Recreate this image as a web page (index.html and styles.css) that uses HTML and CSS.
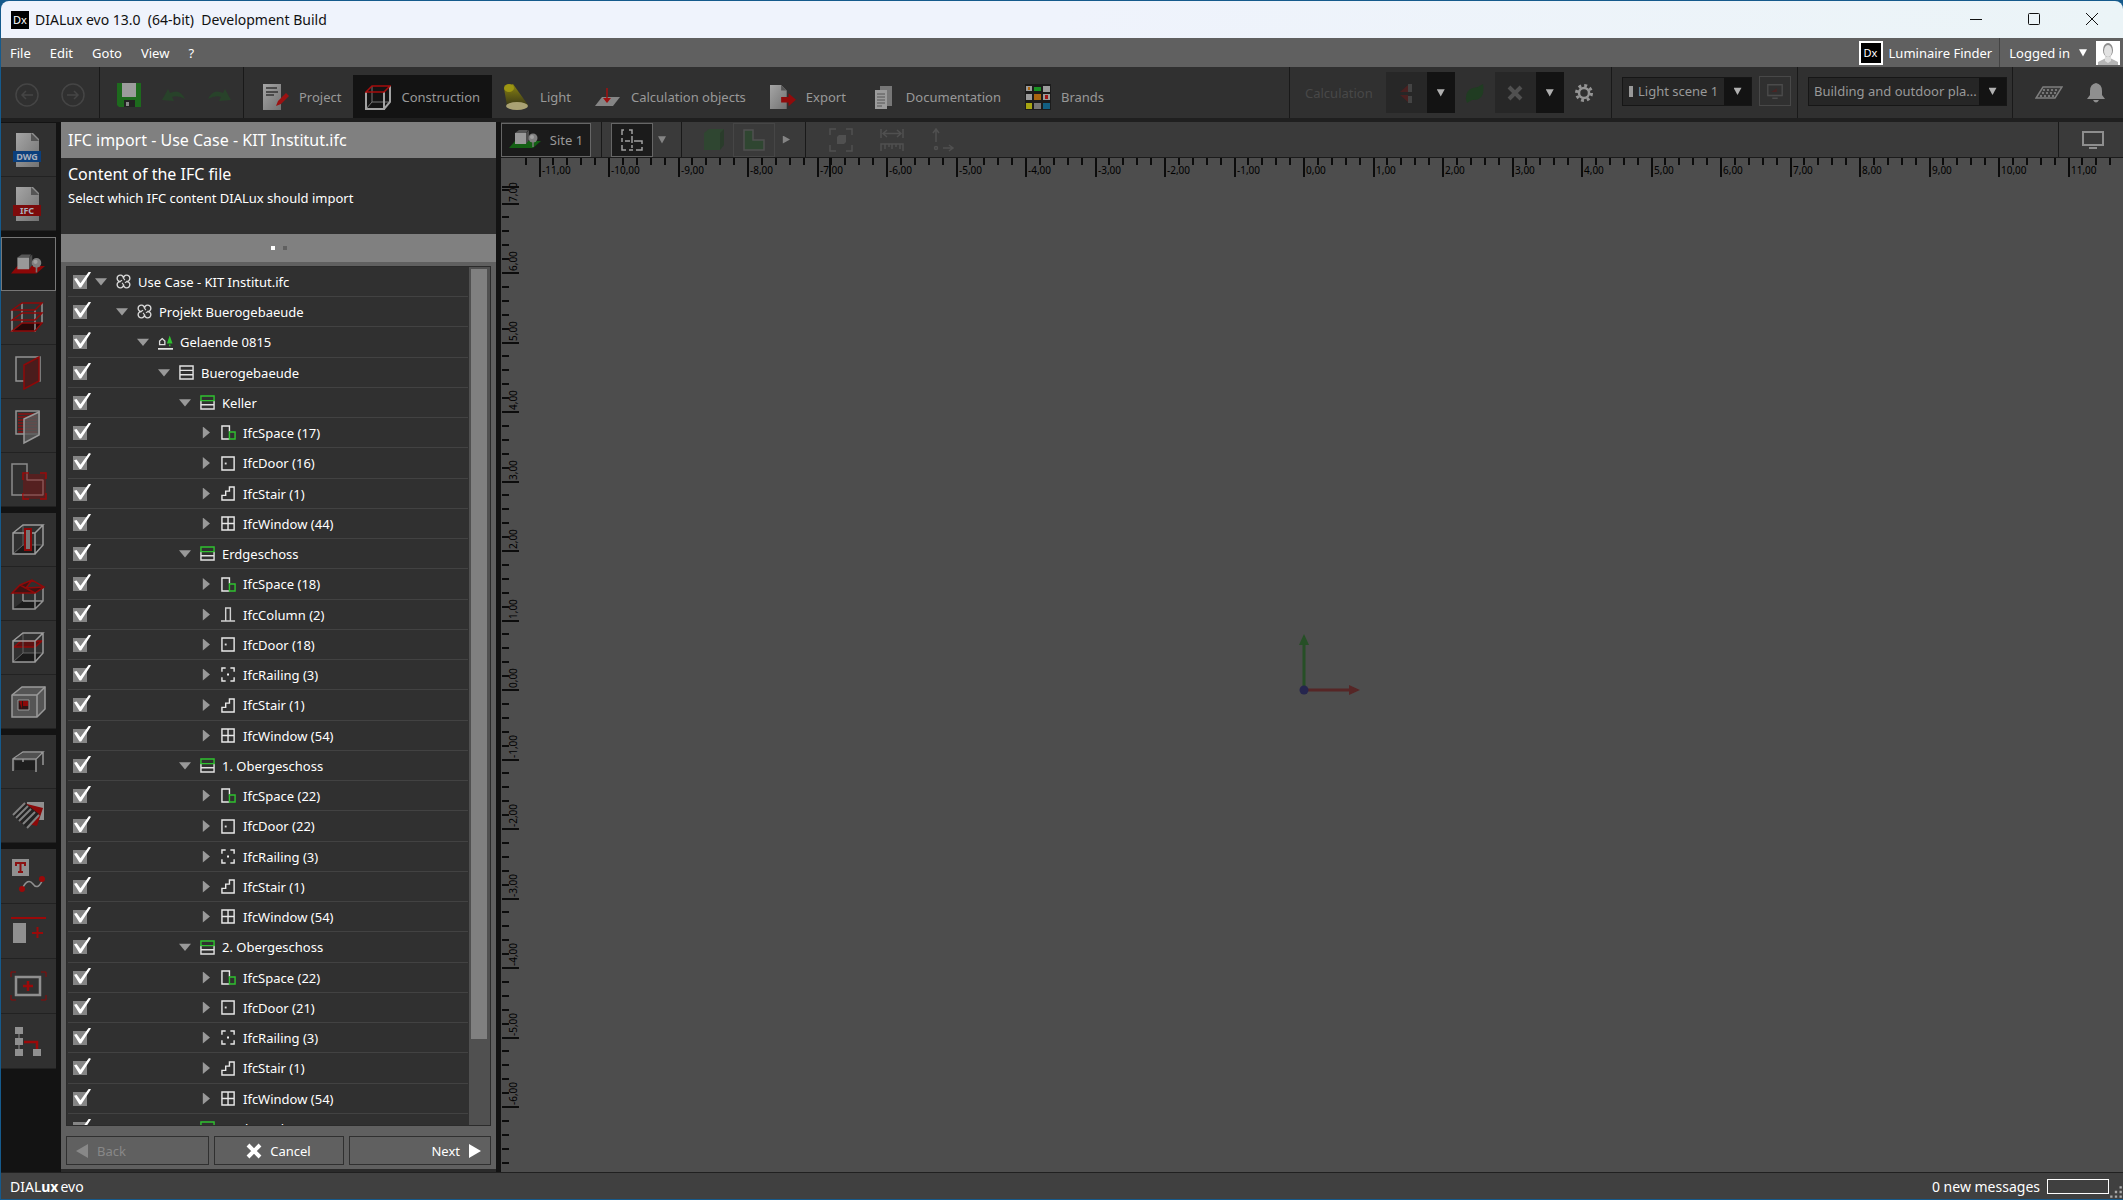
FILE: index.html
```
<!DOCTYPE html>
<html lang="en">
  <head>
    <meta charset="UTF-8" />
    <meta name="viewport" content="width=device-width, initial-scale=1.0" />
    <title>DIALux evo 13.0 (64-bit) Development Build</title>
    <link rel="stylesheet" href="styles.css">
  </head>
  <body>
    <!-- shared icons -->
    <svg class="defs" aria-hidden="true">
      <defs>
        <linearGradient id="beam" x1="0" y1="0" x2="0" y2="1">
          <stop offset="0" stop-color="#8a8412" />
          <stop offset="1" stop-color="#3a3816" />
        </linearGradient>
        <linearGradient id="paper" x1="0" y1="0" x2="1" y2="1">
          <stop offset="0" stop-color="#a5a5a5" />
          <stop offset="1" stop-color="#727272" />
        </linearGradient>
      </defs>
      <symbol id="project" viewBox="0 0 16 16">
        <path d="M8 5A3.4 3.4 0 1 0 5 8A3.4 3.4 0 1 0 8 11A3.4 3.4 0 1 0 11 8A3.4 3.4 0 1 0 8 5z" transform="rotate(0 8 8)" fill="none" stroke="#d8d8d8" stroke-width="1.5" />
        <path d="M8 4.500L9.500 6.500M11.500 8L9.500 9.500M8 11.500L6.500 9.500M4.500 8L6.500 6.500" stroke="#d8d8d8" stroke-width="1.2" />
      </symbol>
      <symbol id="ground" viewBox="0 0 16 16">
        <path d="M1.7 10.3V6.5L4.5 3.8L7.3 6.5V10.3z" fill="none" stroke="#ddd" stroke-width="1.4" />
        <path d="M12.5 0.5L15.5 9H9.5zM11.8 10h1.5v2h-1.5z" fill="#2fc12f" />
        <path d="M0 14.8h16" stroke="#fff" stroke-width="1.6" />
      </symbol>
      <symbol id="building" viewBox="0 0 16 16">
        <path d="M1 1h14v14H1zM1 5.7h14M1 10.4h14" fill="none" stroke="#e2e2e2" stroke-width="1.5" />
      </symbol>
      <symbol id="storey" viewBox="0 0 16 16">
        <path d="M1 6v9h14V6M1 10.4h14" fill="none" stroke="#e2e2e2" stroke-width="1.5" />
        <path d="M1 1h14v5H1z" fill="none" stroke="#2fc12f" stroke-width="1.5" />
      </symbol>
      <symbol id="space" viewBox="0 0 16 16">
        <path d="M9 7V1H1v14h8" fill="none" stroke="#e8e8e8" stroke-width="1.5" />
        <path d="M9 7.5h6V15H9z" fill="none" stroke="#2fc12f" stroke-width="1.5" />
      </symbol>
      <symbol id="door" viewBox="0 0 16 16">
        <path d="M1 1h13v14H1z" fill="none" stroke="#e8e8e8" stroke-width="1.5" />
        <path d="M4 7h2v2H4z" fill="#ddd" />
      </symbol>
      <symbol id="stair" viewBox="0 0 16 16">
        <path d="M1 15V10H5V5.500H9V1H14V15z" fill="none" stroke="#e8e8e8" stroke-width="1.5" />
      </symbol>
      <symbol id="window" viewBox="0 0 16 16">
        <path d="M1 1h13v14H1zM7.500 1v14M1 8h13" fill="none" stroke="#e8e8e8" stroke-width="1.5" />
      </symbol>
      <symbol id="column" viewBox="0 0 16 16">
        <path d="M0 15h15M5 15V1h5v14" fill="none" stroke="#d0d0d0" stroke-width="1.5" />
      </symbol>
      <symbol id="railing" viewBox="0 0 16 16">
        <path d="M1 5V1H5M10 1H14V5M14 11V15H10M5 15H1V11" fill="none" stroke="#e8e8e8" stroke-width="1.5" />
        <path d="M6.500 7h2v2h-2z" fill="#fff" />
      </symbol>
      <symbol id="site" viewBox="0 0 32 24">
        <path class="site-ground" d="M6 13H32L24 20H0z" />
        <path d="M6 5l4-3h9l-2 3z" fill="#565656" />
        <path d="M6 5h11v11H6z" fill="#999" />
        <path d="M17 5l3-3v10l-3 4z" fill="#4d4d4d" />
        <path d="M24 13v6" stroke="#777" stroke-width="1.5" />
        <circle cx="24" cy="10" r="4.5" fill="#808080" />
        <circle cx="23" cy="9" r="2" fill="#a0a0a0" />
      </symbol>
      <symbol id="box" viewBox="0 0 36 36">
        <path d="M3 32L13 23H33L24 32z" fill="#1b1b1b" />
        <path d="M13 3V23H33M13 23L3 32" fill="none" stroke="#656565" />
        <path d="M3 11H25V32H3zM3 11L13 3H33L25 11M33 3V23L25 32" fill="none" stroke="#9b9b9b" stroke-width="1.5" />
      </symbol>
    </svg>

    <div class="window">
      <header class="titlebar">
        <span class="app-icon">Dx</span>
        <span>DIALux evo 13.0&nbsp; (64-bit)&nbsp; Development Build</span>
        <div class="window-buttons">
          <button aria-label="Minimize"><svg viewBox="0 0 12 12"><path d="M0 6.500h12" /></svg></button>
          <button aria-label="Maximize"><svg viewBox="0 0 12 12"><rect x="0.500" y="0.500" width="11" height="11" rx="1" /></svg></button>
          <button aria-label="Close"><svg viewBox="0 0 12 12"><path d="M0 0L12 12M12 0L0 12" /></svg></button>
        </div>
      </header>

      <nav class="menubar">
        <button>File</button>
        <button>Edit</button>
        <button>Goto</button>
        <button>View</button>
        <button>?</button>
        <a class="finder" href="#"><span class="app-icon framed">Dx</span>Luminaire Finder</a>
        <button class="login">
          Logged in <i class="down"></i>
          <svg class="avatar" viewBox="0 0 24 24">
            <path d="M0 0h24v24H0z" fill="#fff" />
            <path d="M2 24v-3l7-3.500h6l7 3.500v3z" fill="#b5b5b5" />
            <path d="M9 13h6v7l-3 2l-3-2z" fill="#ddd" />
            <ellipse cx="12" cy="9" rx="5" ry="7" fill="#8c8c8c" />
            <ellipse cx="12" cy="10" rx="4" ry="6" fill="#e2e2e2" />
          </svg>
        </button>
      </nav>

      <div class="toolbar">
        <div class="group history">
          <button aria-label="Previous"><svg viewBox="0 0 24 24"><circle cx="12" cy="12" r="11" /><path d="M18 12H7M11 8l-4 4l4 4" /></svg></button>
          <button aria-label="Next view"><svg viewBox="0 0 24 24"><circle cx="12" cy="12" r="11" /><path d="M6 12h11M13 8l4 4l-4 4" /></svg></button>
        </div>
        <div class="group edit">
          <button aria-label="Save">
            <svg viewBox="0 0 24 24">
              <path d="M0 0h24v24H2l-2-2z" fill="#1d6a1d" />
              <path d="M5 0h14v14H5z" fill="#9c9c9c" />
              <path d="M7 17h11v7H7z" fill="#222" />
              <path d="M9 19h3v4H9z" fill="#888" />
            </svg>
          </button>
          <button aria-label="Undo"><svg viewBox="0 0 24 24"><path d="M0 17L6 6L8 10Q18 5 23 16Q16 12 10 14L12 18z" fill="#28422a" /></svg></button>
          <button aria-label="Redo"><svg viewBox="0 0 24 24"><path d="M24 17L18 6L16 10Q6 5 1 16Q8 12 14 14L12 18z" fill="#28422a" /></svg></button>
        </div>
        <div class="group tabs">
          <button class="tab">
            <svg viewBox="0 0 26 26">
              <path d="M0 0h18v26H0z" fill="url(#paper)" />
              <path d="M3 4h11M3 8h12M3 11h8" stroke="#333" stroke-width="1.500" />
              <path d="M13 22l2-5l8-8l3 3l-8 8z" fill="#9b1212" />
            </svg>
            Project
          </button>
          <button class="tab active">
            <svg viewBox="0 0 26 26">
              <path d="M7 2V18H25M7 18L1 25" fill="none" stroke="#777" />
              <path d="M1 8V25H19V8M25 2V18L19 25" fill="none" stroke="#a2a2a2" stroke-width="2" />
              <path d="M1 8L7 2H25L19 8z" fill="none" stroke="#a60d0d" stroke-width="1.500" />
            </svg>
            Construction
          </button>
          <button class="tab">
            <svg viewBox="0 0 26 26">
              <path d="M0 4L9 0L24 21L3 22z" fill="url(#beam)" />
              <ellipse cx="5" cy="4" rx="5" ry="4" fill="#9c9512" />
              <ellipse cx="13" cy="22" rx="11" ry="4" fill="#aaa274" />
            </svg>
            Light
          </button>
          <button class="tab">
            <svg viewBox="0 0 26 26">
              <path d="M7 13H25L18 22H0z" fill="#858585" />
              <path d="M12 4V15" stroke="#a01010" stroke-width="1.500" />
              <path d="M8 14h8l-4 5z" fill="#a01010" />
            </svg>
            Calculation objects
          </button>
          <button class="tab">
            <svg viewBox="0 0 28 26">
              <path d="M0 0h12l6 6v20H0z" fill="url(#paper)" />
              <path d="M12 0v6h6z" fill="#555" />
              <path d="M12 13h8V9l8 7l-8 7v-4h-8z" fill="#900b0b" />
            </svg>
            Export
          </button>
          <button class="tab">
            <svg viewBox="0 0 26 26">
              <path d="M10 2h12v20H10z" fill="#777" />
              <path d="M5 6h12v19H5z" fill="#9b9b9b" />
              <path d="M7 10h8M7 13h8M7 16h8M7 19h8M7 22h5" stroke="#555" />
            </svg>
            Documentation
          </button>
          <button class="tab">
            <svg viewBox="0 0 26 26">
              <path d="M0 0h26v26H0z" fill="#1c1c1c" />
              <path d="M1 2h6v5H1zM18 2h7v6h-7zM1 10h6v6H1zM18 10h7v6h-7z" fill="#9c9c9c" />
              <path d="M9 3h7v4H9z" fill="#1b9224" />
              <path d="M9 10h7v6H9zM3 3h2v3H3z" fill="#aa6510" />
              <path d="M1 19h6v6H1z" fill="#a7a512" />
              <path d="M9 19h7v6H9z" fill="#777" />
              <path d="M18 19h7v6h-7z" fill="#125f82" />
              <path d="M20 11h3v4h-3z" fill="#a01515" />
            </svg>
            Brands
          </button>
        </div>
        <div class="group calc">
          <span class="disabled">Calculation</span>
          <div class="split">
            <button aria-label="Start calculation"><svg viewBox="0 0 24 24"><path d="M6 11L14 4V11zM6 14H14V21z" fill="#4a2020" /><path d="M14 3h4v8h-4zM14 15h4v7h-4z" fill="#444" /></svg></button>
            <button class="drop" aria-label="Calculation options"><i class="down"></i></button>
          </div>
          <svg class="leaf" viewBox="0 0 20 20"><path d="M1 17Q0 7 8 5Q14 4 18 1Q21 18 7 17L2 20z" fill="#203c22" /></svg>
          <div class="split">
            <button aria-label="Delete results"><svg viewBox="0 0 24 24"><path d="M6 6L18 18M18 6L6 18" stroke="#505050" stroke-width="4" /></svg></button>
            <button class="drop" aria-label="Delete options"><i class="down"></i></button>
          </div>
          <button class="gear" aria-label="Settings">
            <svg viewBox="0 0 20 20"><circle cx="10" cy="10" r="7.500" stroke="#949494" stroke-width="3" stroke-dasharray="2.900 2.990" fill="none" /><circle cx="10" cy="10" r="5" stroke="#949494" stroke-width="2.500" fill="none" /></svg>
          </button>
        </div>
        <div class="group scenes">
          <div class="combo scene">
            <i class="scene-mark"></i>
            <select aria-label="Light scene"><option>Light scene 1</option></select>
            <span class="arrow"><i class="down"></i></span>
          </div>
          <button class="preview" aria-label="Preview"><svg viewBox="0 0 20 20"><path d="M2 3h16v12H2zM7 18h6" /><path d="M6 11l6-4v4z" fill="#4a2424" stroke="none" /></svg></button>
        </div>
        <div class="group">
          <div class="combo mode">
            <select aria-label="Planning mode"><option>Building and outdoor pla...</option></select>
            <span class="arrow"><i class="down"></i></span>
          </div>
        </div>
        <div class="group extras">
          <svg viewBox="0 0 28 16"><path d="M8 2H27L20 13H1z" fill="#3a3a3a" stroke="#7d7d7d" stroke-width="1.500" /><path d="M8 5h16M7 8h15M5 11h14" stroke="#8a8a8a" stroke-width="1.500" stroke-dasharray="2 2" /></svg>
          <svg class="bell" viewBox="0 0 18 20"><path d="M9 0Q15 1 15 8V12L18 16H0L3 12V8Q3 1 9 0zM6 17h6q-3 5-6 0z" fill="#8f8f8f" /></svg>
        </div>
      </div>

      <main class="workspace">
        <aside class="tools">
          <div class="tool-group">
            <button aria-label="DWG">
              <svg viewBox="0 0 36 36">
                <path d="M6 1h17l6 6v28H6z" fill="url(#paper)" /><path d="M21 1v8h8z" fill="#555" />
                <path d="M3 19h28v11H3z" fill="#0b3f7c" /><text x="17" y="28">DWG</text>
              </svg>
            </button>
            <button aria-label="IFC">
              <svg viewBox="0 0 36 36">
                <path d="M6 1h17l6 6v28H6z" fill="url(#paper)" /><path d="M21 1v8h8z" fill="#555" />
                <path d="M3 19h28v11H3z" fill="#7c0b0b" /><text x="17" y="28">IFC</text>
              </svg>
            </button>
          </div>
          <div class="tool-group">
            <button class="selected" aria-label="Site"><svg class="red-site" viewBox="0 0 36 36"><use href="#site" x="1" y="6" width="34" height="26" /></svg></button>
            <button aria-label="Storeys">
              <svg viewBox="0 0 36 36">
                <path d="M3 31L13 23H33L25 31z" fill="#260808" />
                <path d="M2 10V32M25 10V32M12 3V23M32 3V23" fill="none" stroke="#949494" stroke-width="1.500" />
                <path d="M2 10L12 3H32L25 10zM2 20L12 13H32L25 20zM2 31L12 23H32L25 31z" fill="none" stroke="#8f0808" stroke-width="1.500" />
              </svg>
            </button>
            <button aria-label="Walls">
              <svg viewBox="0 0 36 36">
                <path d="M6 3h24v24H6z" fill="none" stroke="#929292" stroke-width="1.500" />
                <path d="M14 11L29 3V27L14 35z" fill="#4a1c1c" stroke="#8f0808" stroke-width="1.500" />
              </svg>
            </button>
            <button aria-label="Facade">
              <svg viewBox="0 0 36 36">
                <path d="M6 3h23v23H6z" fill="none" stroke="#929292" stroke-width="1.500" />
                <path d="M8 6h19M8 9h19M8 12h19M8 15h19M8 18h19M8 21h19M8 24h19" stroke="#8b1111" stroke-width="1.500" />
                <path d="M14 11L29 4V27L14 35z" fill="#5a5a5a" fill-opacity="0.800" stroke="#9a9a9a" stroke-width="1.500" />
              </svg>
            </button>
            <button aria-label="Rooms">
              <svg viewBox="0 0 36 36">
                <path d="M2 2h15v16h16v15H2z" fill="none" stroke="#8b8b8b" stroke-width="1.500" />
                <path d="M13 12h23v25H13z" fill="#651919" fill-opacity="0.700" />
                <path d="M13 18V11h6M30 11h6v6M36 31v6h-6M19 37h-6v-6" fill="none" stroke="#9a0909" stroke-width="1.500" />
                <path d="M17 12v6h16v15H13" fill="none" stroke="#8e5959" />
              </svg>
            </button>
          </div>
          <div class="tool-group">
            <button aria-label="Columns"><svg viewBox="0 0 36 36"><use href="#box" width="36" height="36" /><path d="M15 7h6v21h-6z" fill="#777" stroke="#8b0909" stroke-width="2" /></svg></button>
            <button aria-label="Roofs">
              <svg viewBox="0 0 36 36">
                <path d="M3 33L13 25H33L25 33z" fill="#1b1b1b" />
                <path d="M3 17V33H25V17M33 11V25L25 33M13 25H33M13 14V25" fill="none" stroke="#929292" stroke-width="1.500" />
                <path d="M2 17L10 9L22 4L34 11L25 17zM10 9L25 17M22 4L16 12L34 11" fill="#3e1414" stroke="#8f0909" stroke-width="1.500" />
              </svg>
            </button>
            <button aria-label="Ceilings"><svg viewBox="0 0 36 36"><path d="M4 17L11 11H32L25 17z" fill="#5d1111" stroke="#8f0909" stroke-width="1.500" /><use href="#box" width="36" height="36" /></svg></button>
            <button aria-label="Openings">
              <svg viewBox="0 0 36 36">
                <path d="M2 11L12 3H35V25L27 33H2z" fill="#555" stroke="#9a9a9a" stroke-width="1.500" />
                <path d="M2 11H27V33M27 11L35 3" fill="none" stroke="#9a9a9a" stroke-width="1.500" />
                <path d="M8 16h11v10H8z" fill="#2b1515" stroke="#9a9a9a" /><path d="M13 17h5v5h-5zM9 17h3v8z" fill="#8b0909" />
              </svg>
            </button>
          </div>
          <div class="tool-group">
            <button aria-label="Furniture"><svg viewBox="0 0 36 36"><path d="M5 26V17H25V26z" fill="#1e1e1e" /><path d="M3 27V15L13 8H33L26 15H3M26 15V28M33 8V21M13 18V15" fill="none" stroke="#969696" stroke-width="1.500" /><path d="M5 14L13 9H31L26 14z" fill="#505050" /></svg></button>
            <button aria-label="Materials">
              <svg viewBox="0 0 36 36">
                <path d="M17 4h17v18H17z" fill="#909090" />
                <path d="M13 5L33 10L27 28L10 24z" fill="#8b0909" />
                <path d="M3 17L15 5L29 16L17 30z" fill="#222" />
                <path d="M3 17L15 5M6 20L18 8M9 23L21 11M13 26L25 14M17 30L29 17" stroke="#808080" stroke-width="2" />
              </svg>
            </button>
          </div>
          <div class="tool-group">
            <button aria-label="Text and curves">
              <svg viewBox="0 0 36 36">
                <path d="M2 1h17v17H2z" fill="#909090" /><path d="M6 8V5H15V8M10.500 5V14M8 14h5" fill="none" stroke="#8b1111" stroke-width="2" />
                <path d="M12 31Q18 19 23 26T33 21" fill="none" stroke="#909090" stroke-width="1.500" />
                <circle cx="12" cy="31" r="3" fill="#9a0909" /><circle cx="32" cy="21" r="3" fill="#9a0909" />
              </svg>
            </button>
            <button aria-label="Add element"><svg viewBox="0 0 36 36"><path d="M1 5h35M22 20h11M27.500 14v11" stroke="#9a0909" stroke-width="2" /><path d="M3 10h13v20H3z" fill="#909090" /></svg></button>
            <button aria-label="Add area">
              <svg viewBox="0 0 36 36">
                <path d="M6 9h24v18H6z" fill="none" stroke="#8f8f8f" stroke-width="2.500" />
                <path d="M18 13v10M13 18h10" stroke="#9a0909" stroke-width="2.500" />
                <path d="M1 9V4H6M31 4h5v5M36 27v5h-5M6 32H1v-5" fill="none" stroke="#8b0909" />
              </svg>
            </button>
            <button aria-label="Arrange"><svg viewBox="0 0 36 36"><path d="M14 19H27V27" fill="none" stroke="#9a0909" stroke-width="2.500" /><path d="M9 10v20" stroke="#909090" /><path d="M5 4h8v7H5zM5 15h8v7H5zM5 26h8v7H5zM23 26h8v7h-8z" fill="#909090" /></svg></button>
          </div>
        </aside>

        <section class="wizard">
          <h1>IFC import - Use Case - KIT Institut.ifc</h1>
          <div class="intro">
            <h2>Content of the IFC file</h2>
            <p>Select which IFC content DIALux should import</p>
          </div>
          <div class="steps"><i class="current"></i><i></i></div>
          <div class="wizard-body">
            <div class="tree-box">
              <ul class="tree" id="tree"></ul>
              <div class="scrollbar"><div class="thumb"></div></div>
            </div>
            <div class="wizard-buttons">
              <button class="back" disabled><svg viewBox="0 0 14 16"><path d="M13 1V15L1 8z" /></svg>Back</button>
              <button class="cancel"><svg viewBox="0 0 16 16"><path d="M2 2L14 14M14 2L2 14" /></svg>Cancel</button>
              <button class="next">Next<svg viewBox="0 0 14 16"><path d="M1 1V15L13 8z" /></svg></button>
            </div>
          </div>
        </section>

        <section class="cad">
          <div class="viewbar">
            <div class="view-group site-group">
              <button class="site-button"><svg viewBox="0 0 32 24"><use href="#site" /></svg>Site 1</button>
            </div>
            <div class="view-group plan-group">
              <button class="plan-button" aria-label="Floor plan"><svg viewBox="0 0 24 24"><path d="M4 2H2V7M2 10V14M2 17V22H6M9 2h3V6M12 8v7M9 22h4M16 22h6v-3M5 13h5M14 13h8v3M12 17v3" fill="none" stroke="#a0a0a0" stroke-width="1.500" /></svg></button>
              <i class="down"></i>
            </div>
            <div class="view-group shape-group">
              <svg viewBox="0 0 24 24"><path d="M2 5l5-4h15l-4 4zM2 5h16v17H2z" fill="#2f4631" /><path d="M18 5l4-4v16l-4 5z" fill="#2a3c2b" /></svg>
              <button class="shape-button" aria-label="Room outline"><svg viewBox="0 0 24 24"><path d="M2 2h9v10h11v10H2z" fill="#2f4631" stroke="#505050" stroke-width="1.500" /></svg></button>
              <i class="right"></i>
            </div>
            <div class="view-group measure-group">
              <svg viewBox="0 0 24 24"><path d="M1 7V1h6M17 1h6v6M23 17v6h-6M7 23H1v-6" /><path d="M8 9l2-2h7v7l-2 2H8z" fill="#505050" stroke="none" /></svg>
              <svg viewBox="0 0 24 24"><path d="M1 1v9M23 1v9M3 5.500h18M7 2L3 5.500L7 9M17 2l4 3.500L17 9M1 23v-7h22v7M5 16v5M9 16v3M12 16v5M16 16v3M20 16v5" /></svg>
              <svg viewBox="0 0 24 24"><path d="M5 14V2M2 5l3-4l3 4M12 20h10M18 17l4 3l-4 3" /><circle cx="5" cy="20" r="1.500" /></svg>
            </div>
            <div class="view-group screen-group">
              <svg viewBox="0 0 24 20"><path d="M2 2h20v13H2zM8 18h8" stroke="#8e8e8e" stroke-width="2" fill="none" /></svg>
            </div>
          </div>
          <svg class="drawing" id="drawing"></svg>
        </section>
      </main>

      <footer class="statusbar">
        <span class="brand">DIAL<b>ux</b>evo</span>
        <span class="messages">0 new messages</span>
        <div class="progress"></div>
        <svg class="grip" viewBox="0 0 12 12"><path d="M9 1h2v2H9zM9 5h2v2H9zM9 9h2v2H9zM5 5h2v2H5zM5 9h2v2H5zM1 9h2v2H1z" /></svg>
      </footer>
    </div>
    <script src="script.js"></script>
  </body>
</html>
```
FILE: styles.css
```
*,
*::before,
*::after {
  box-sizing: border-box;
}

body {
  margin: 0;
  background-color: #155a8c;
  font-family: "Noto Sans", sans-serif;
  font-size: 13px;
  color: white;
}

button,
select {
  margin: 0;
  padding: 0;
  border: none;
  background: none;
  color: inherit;
  font: inherit;
}

a {
  color: inherit;
  text-decoration: none;
}

svg {
  flex: none;
}

.defs {
  position: absolute;
  width: 0;
  height: 0;
}

.down,
.right {
  flex: none;
  width: 8px;
  height: 8px;
  background-color: #b0b0b0;
  clip-path: polygon(0 10%, 100% 10%, 50% 100%);
}

.right {
  clip-path: polygon(10% 0, 100% 50%, 10% 100%);
}

.window {
  display: flex;
  flex-direction: column;
  height: 100vh;
  padding: 1px 0 1px 1px;
}

/* title bar */

.titlebar {
  display: flex;
  align-items: center;
  flex: none;
  height: 37px;
  padding-left: 10px;
  padding-right: 2px;
  gap: 6px;
  border-radius: 8px 8px 0 0;
  background: linear-gradient(to right, #eff3fc 50%, #ebf4f7);
  color: #111;
  font-size: 14px;
}

.app-icon {
  display: grid;
  place-items: center;
  width: 18px;
  height: 18px;
  background-color: black;
  color: white;
  font-size: 11px;
}

.framed {
  width: 24px;
  height: 24px;
  border: 2px solid white;
}

.window-buttons {
  display: flex;
  margin-left: auto;
}

.window-buttons button {
  width: 58px;
  height: 36px;
}

.window-buttons svg {
  width: 12px;
  height: 12px;
  fill: none;
  stroke: #111;
}

/* menu */

.menubar {
  display: flex;
  align-items: center;
  flex: none;
  height: 29px;
  padding-left: 9px;
  gap: 19px;
  background-color: #606060;
}

.finder {
  display: flex;
  align-items: center;
  gap: 6px;
  margin-left: auto;
}

.login {
  display: flex;
  align-items: center;
  align-self: stretch;
  gap: 9px;
  margin-left: -12px;
  padding: 0 3px 0 9px;
  border-left: 1px solid #444;
}

.login .down {
  background-color: white;
}

.avatar {
  width: 24px;
  height: 24px;
}

/* main toolbar */

.toolbar {
  display: flex;
  flex: none;
  height: 55px;
  border-bottom: 4px solid #1f1f1f;
  background-color: #303030;
  color: #999;
}

.group {
  display: flex;
  align-items: center;
  border-right: 1px solid #191919;
}

.history {
  gap: 22px;
  width: 99px;
  padding-top: 4px;
  padding-left: 14px;
}

.history svg,
.edit svg {
  display: block;
  width: 24px;
  height: 24px;
}

.history svg {
  fill: none;
  stroke: #454545;
  stroke-width: 1.5;
}

.edit {
  gap: 21px;
  width: 144px;
  padding-top: 4px;
  padding-left: 17px;
}

.tabs {
  flex: 1;
  padding-top: 8px;
  padding-left: 7px;
}

.tab {
  display: flex;
  align-items: center;
  height: 43px;
  gap: 10px;
  padding: 0 12px;
  white-space: nowrap;
}

.tab svg {
  width: 26px;
  height: 26px;
}

.tab.active {
  background-color: #131313;
}

.calc {
  gap: 10px;
  width: 322px;
  padding-left: 15px;
}

.disabled {
  margin-right: 3px;
  color: #484848;
}

.split {
  display: flex;
  height: 41px;
  background-color: #272727;
}

.split button {
  display: grid;
  place-items: center;
  width: 41px;
}

.split svg {
  width: 24px;
  height: 24px;
}

.split .drop {
  width: 28px;
  background-color: #131313;
}

.leaf {
  width: 20px;
  height: 20px;
}

.gear svg {
  display: block;
  width: 20px;
  height: 20px;
}

.scenes {
  gap: 7px;
  width: 186px;
  padding-left: 10px;
  padding-bottom: 3px;
}

.combo {
  display: flex;
  align-items: center;
  height: 29px;
  border: 1px solid #161616;
  background-color: #262626;
}

.combo select {
  flex: 1;
  width: 0;
  height: 100%;
  padding-left: 5px;
  appearance: none;
}

.combo .arrow {
  display: grid;
  place-items: center;
  width: 27px;
  height: 100%;
  background-color: #131313;
}

.scene {
  width: 130px;
}

.scene-mark {
  width: 4px;
  height: 11px;
  margin-left: 6px;
  background-color: #999;
}

.mode {
  width: 199px;
  margin: 0 5px 3px 10px;
}

.preview {
  display: grid;
  place-items: center;
  width: 32px;
  height: 30px;
  border: 1px solid #484848;
}

.preview svg {
  width: 18px;
  height: 18px;
  fill: none;
  stroke: #4b4b4b;
  stroke-width: 1.5;
}

.extras {
  gap: 24px;
  padding-left: 22px;
  padding-right: 18px;
  border: none;
}

.extras svg {
  width: 28px;
  height: 16px;
}

.extras .bell {
  width: 18px;
  height: 20px;
}

/* workspace */

.workspace {
  display: flex;
  flex: 1;
  min-height: 0;
  background-color: #131313;
}

.tools {
  display: flex;
  flex-direction: column;
  flex: none;
  gap: 6px;
  width: 60px;
  padding-top: 1px;
  padding-right: 5px;
}

.tool-group button {
  display: grid;
  place-items: center;
  width: 100%;
  height: 54px;
  padding-right: 2px;
  border-bottom: 1px solid #222;
  background-color: #303030;
}

.tool-group:last-child button {
  height: 55px;
}

.tool-group svg {
  width: 36px;
  height: 36px;
  overflow: visible;
}

.tool-group text {
  fill: #a8b0bd;
  font-size: 9px;
  font-weight: bold;
  text-anchor: middle;
}

.tool-group .selected {
  border: 1px solid #777;
  background-color: #1b1b1b;
}

.site-ground {
  fill: var(--ground, #146014);
}

.red-site {
  --ground: #8c0707;
}

/* import wizard */

.wizard {
  display: flex;
  flex-direction: column;
  flex: none;
  width: 435px;
  border-bottom: 3px solid #2a2a2a;
  background-color: #606060;
}

.wizard h1 {
  margin: 0;
  padding-left: 7px;
  background-color: #808080;
  font-size: 16px;
  font-weight: normal;
  line-height: 36px;
}

.intro {
  height: 76px;
  padding: 4px 7px;
  background-color: #303030;
}

.intro h2 {
  margin: 0;
  font-size: 16px;
  font-weight: normal;
  line-height: 24px;
}

.intro p {
  margin: 0;
  line-height: 24px;
}

.steps {
  display: flex;
  align-items: center;
  justify-content: center;
  gap: 8px;
  height: 28px;
  background-color: #808080;
}

.steps i {
  width: 4px;
  height: 4px;
  background-color: #606060;
}

.steps .current {
  background-color: white;
}

.wizard-body {
  display: flex;
  flex-direction: column;
  flex: 1;
  min-height: 0;
  gap: 10px;
  padding: 4px 5px;
}

.tree-box {
  display: flex;
  flex: 1;
  min-height: 0;
  overflow: hidden;
  border: 1px solid #2b2b2b;
  background-color: #303030;
}

.tree {
  flex: 1;
  margin: 0;
  padding: 0;
  list-style: none;
}

.row {
  display: flex;
  align-items: center;
  height: 30px;
  margin: 0 1px;
  padding-left: 5px;
  border-bottom: 1px solid #424242;
}

.row:nth-child(4n + 3) {
  height: 31px;
}

.row label {
  display: flex;
  align-items: center;
  gap: 7px;
}

.row svg {
  width: 15px;
  height: 15px;
}

.row input {
  position: relative;
  flex: none;
  width: 14px;
  height: 14px;
  margin: 0 8px 0 0;
  background-color: #858585;
  appearance: none;
}

.row input:checked::before {
  content: "";
  position: absolute;
  left: 1px;
  bottom: 1px;
  width: 17px;
  height: 16px;
  background-color: white;
  clip-path: polygon(0 45%, 15% 40%, 38% 74%, 88% 0, 100% 4%, 42% 100%, 32% 100%);
}

/* one step of indent per tree level */
.indent {
  flex: none;
  width: calc(21px * var(--level));
}

.toggle {
  display: grid;
  place-items: center;
  flex: none;
  width: 12px;
  height: 20px;
  margin-right: 9px;
}

.toggle i {
  background-color: #999;
}

.toggle .down {
  width: 12px;
}

.toggle .right {
  height: 12px;
}

.scrollbar {
  width: 21px;
  padding: 2px 3px 0 2px;
  background-color: #505050;
}

.thumb {
  height: 90%;
  background-color: #808080;
}

.wizard-buttons {
  display: flex;
  flex: none;
  gap: 5px;
}

.wizard-buttons button {
  display: flex;
  align-items: center;
  flex: 1;
  height: 29px;
  gap: 8px;
  padding: 0 8px;
  border: 1px solid #303030;
}

.wizard-buttons svg {
  width: 14px;
  height: 16px;
  fill: white;
}

.wizard-buttons .back {
  color: #888;
}

.wizard-buttons .back svg {
  fill: #888;
}

.wizard-buttons .cancel {
  flex: none;
  justify-content: center;
  width: 130px;
}

.wizard-buttons .cancel svg {
  width: 16px;
  stroke: white;
  stroke-width: 4;
}

.wizard-buttons .next {
  justify-content: flex-end;
}

/* drawing area */

.cad {
  display: flex;
  flex-direction: column;
  flex: 1;
  min-width: 0;
  margin-left: 5px;
  background-color: #4d4d4d;
}

.viewbar {
  display: flex;
  flex: none;
  height: 36px;
  border-bottom: 1px solid #1b1b1b;
  background-color: #3a3a3a;
  color: #999;
}

.view-group {
  display: flex;
  align-items: center;
  border-right: 1px solid #191919;
}

.view-group svg {
  width: 24px;
  height: 24px;
}

.view-group button {
  display: flex;
  align-items: center;
  justify-content: center;
  height: 34px;
  border: 1px solid #666;
  background-color: #1b1b1b;
}

.view-group .down,
.view-group .right {
  background-color: #848484;
}

.site-group {
  width: 101px;
}

.view-group .site-button {
  width: 90px;
  gap: 9px;
}

.site-button svg {
  width: 32px;
}

.plan-group {
  gap: 5px;
  width: 80px;
  padding-left: 9px;
}

.view-group .plan-button,
.view-group .shape-button {
  width: 42px;
}

.shape-group {
  gap: 7px;
  width: 124px;
  padding-left: 20px;
}

.view-group .shape-button {
  border-color: #464646;
  background: none;
}

.measure-group {
  flex: 1;
  gap: 27px;
  padding-left: 23px;
}

.measure-group svg {
  fill: none;
  stroke: #505050;
  stroke-width: 1.5;
}

.screen-group {
  justify-content: center;
  width: 64px;
  padding-left: 4px;
  border: none;
}

.drawing {
  flex: 1;
  width: 100%;
  min-height: 0;
  color: black;
  font-size: 10px;
}

/* status bar */

.statusbar {
  display: flex;
  align-items: center;
  flex: none;
  height: 27px;
  padding-left: 9px;
  border-top: 1px solid #202020;
  background-color: #404040;
  font-size: 14px;
}

.brand b {
  margin-right: 2px;
}

.messages {
  margin-left: auto;
  margin-right: 7px;
}

.progress {
  width: 62px;
  height: 15px;
  border: 1px solid white;
}

.grip {
  align-self: flex-end;
  width: 14px;
  height: 14px;
  fill: #a8a8a8;
}
```
FILE: script.js
```
// name, level, icon
const tree = [
  ["Use Case - KIT Institut.ifc", 0, "project"],
  ["Projekt Buerogebaeude", 1, "project"],
  ["Gelaende 0815", 2, "ground"],
  ["Buerogebaeude", 3, "building"],
  ["Keller", 4, "storey"],
  ["IfcSpace (17)", 5, "space"],
  ["IfcDoor (16)", 5, "door"],
  ["IfcStair (1)", 5, "stair"],
  ["IfcWindow (44)", 5, "window"],
  ["Erdgeschoss", 4, "storey"],
  ["IfcSpace (18)", 5, "space"],
  ["IfcColumn (2)", 5, "column"],
  ["IfcDoor (18)", 5, "door"],
  ["IfcRailing (3)", 5, "railing"],
  ["IfcStair (1)", 5, "stair"],
  ["IfcWindow (54)", 5, "window"],
  ["1. Obergeschoss", 4, "storey"],
  ["IfcSpace (22)", 5, "space"],
  ["IfcDoor (22)", 5, "door"],
  ["IfcRailing (3)", 5, "railing"],
  ["IfcStair (1)", 5, "stair"],
  ["IfcWindow (54)", 5, "window"],
  ["2. Obergeschoss", 4, "storey"],
  ["IfcSpace (22)", 5, "space"],
  ["IfcDoor (21)", 5, "door"],
  ["IfcRailing (3)", 5, "railing"],
  ["IfcStair (1)", 5, "stair"],
  ["IfcWindow (54)", 5, "window"],
  ["Dachgeschoss", 4, "storey"],
];

document.getElementById("tree").innerHTML = tree
  .map(
    ([name, level, icon], i) => `
      <li class="row">
        <input type="checkbox" id="node${i}" checked />
        <span class="indent" style="--level: ${level}"></span>
        <button class="toggle" aria-label="Toggle ${name}"><i class="${level === 5 ? "right" : "down"}"></i></button>
        <label for="node${i}"><svg><use href="#${icon}" /></svg>${name}</label>
      </li>`
  )
  .join("");

const drawing = document.getElementById("drawing");

function line(x1, y1, x2, y2, color = "#0c0c0c", width = 2) {
  return `<path d="M${x1} ${y1}L${x2} ${y2}" stroke="${color}" stroke-width="${width}" />`;
}

function drawRulers() {
  const { width, height } = drawing.getBoundingClientRect();
  const metre = 69.5;
  const ox = Math.round(width * 0.4951);
  const oy = Math.round(height * 0.5247);
  let out = "";

  // five ticks per metre, a long one with a label on the metre itself
  for (let i = -200; i <= 200; i++) {
    const major = i % 5 === 0;
    const x = Math.round(ox + (i * metre) / 5);
    const y = Math.round(oy - (i * metre) / 5);
    const label = (i / 5).toFixed(2).replace(".", ",");

    if (x > 20 && x < width) {
      out += line(x, 0, x, major ? 19 : 7);
      if (major) out += `<text x="${x + 2}" y="16" fill="currentColor">${label}</text>`;
    }
    if (y > 25 && y < height) {
      out += line(1, y, major ? 18 : 8, y);
      if (major) out += `<text transform="translate(16 ${y - 2}) rotate(-90)" fill="currentColor">${label}</text>`;
    }
  }

  // cursor position
  out += line(329, 0, 329, 19) + line(1, 29, 18, 29);

  // origin with both axes
  out += line(ox, oy, ox, oy - 46, "#264f26", 3) + line(ox, oy, ox + 46, oy, "#562626", 3);
  out += `<path d="M${ox - 5} ${oy - 45}L${ox} ${oy - 56}L${ox + 5} ${oy - 45}z" fill="#264f26" />`;
  out += `<path d="M${ox + 45} ${oy - 5}L${ox + 56} ${oy}L${ox + 45} ${oy + 5}z" fill="#562626" />`;
  out += `<circle cx="${ox}" cy="${oy}" r="4.5" fill="#26264e" />`;

  drawing.innerHTML = out;
}

drawRulers();
window.addEventListener("resize", drawRulers);
```
